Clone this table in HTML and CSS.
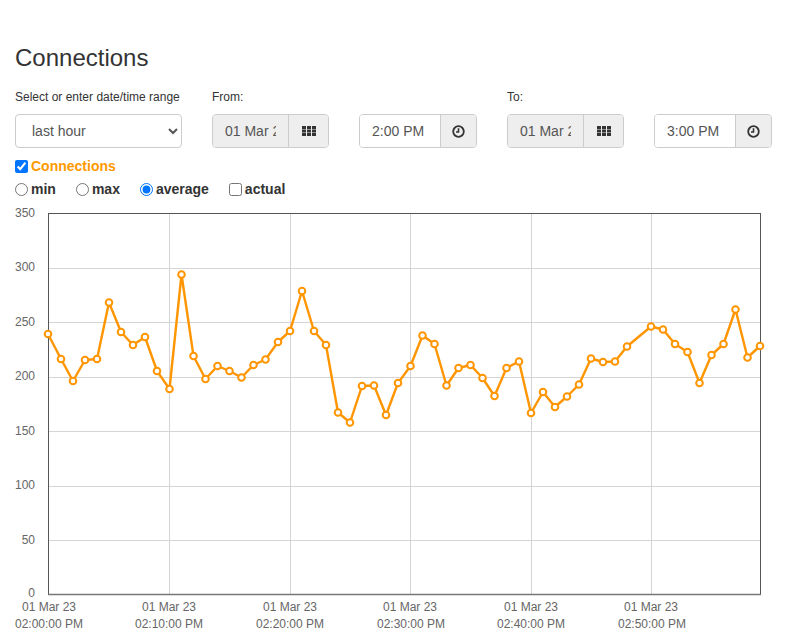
FILE: index.html
```html
<!DOCTYPE html>
<html>
<head>
<meta charset="utf-8">
<link rel="stylesheet" href="styles.css">
</head>
<body>
<div class="page">
  <h1 class="title">Connections</h1>
  <div class="controls">
    <div class="field">
      <label class="field-label">Select or enter date/time range</label>
      <select class="range-select">
        <option>last hour</option>
      </select>
    </div>
    <div class="field">
      <label class="field-label">From:</label>
      <div class="group group-date">
        <input class="grp-input readonly" type="text" value="01 Mar 23" readonly>
        <span class="grp-btn">
          <svg width="14" height="10" viewBox="0 0 14 10"><g fill="#333"><rect x="0" y="0" width="4" height="3"/><rect x="5" y="0" width="4" height="3"/><rect x="10" y="0" width="4" height="3"/><rect x="0" y="3.5" width="4" height="3"/><rect x="5" y="3.5" width="4" height="3"/><rect x="10" y="3.5" width="4" height="3"/><rect x="0" y="7" width="4" height="3"/><rect x="5" y="7" width="4" height="3"/><rect x="10" y="7" width="4" height="3"/></g></svg>
        </span>
      </div>
    </div>
    <div class="field">
      <label class="field-label">&nbsp;</label>
      <div class="group group-time">
        <input class="grp-input" type="text" value="2:00 PM">
        <span class="grp-btn">
          <svg width="13" height="13" viewBox="0 0 13 13"><circle cx="6.5" cy="6.5" r="5.3" fill="none" stroke="#333" stroke-width="1.8"/><path d="M6.5 3.2V7H4" fill="none" stroke="#333" stroke-width="1.6"/></svg>
        </span>
      </div>
    </div>
    <div class="field">
      <label class="field-label">To:</label>
      <div class="group group-date">
        <input class="grp-input readonly" type="text" value="01 Mar 23" readonly>
        <span class="grp-btn">
          <svg width="14" height="10" viewBox="0 0 14 10"><g fill="#333"><rect x="0" y="0" width="4" height="3"/><rect x="5" y="0" width="4" height="3"/><rect x="10" y="0" width="4" height="3"/><rect x="0" y="3.5" width="4" height="3"/><rect x="5" y="3.5" width="4" height="3"/><rect x="10" y="3.5" width="4" height="3"/><rect x="0" y="7" width="4" height="3"/><rect x="5" y="7" width="4" height="3"/><rect x="10" y="7" width="4" height="3"/></g></svg>
        </span>
      </div>
    </div>
    <div class="field">
      <label class="field-label">&nbsp;</label>
      <div class="group group-time">
        <input class="grp-input" type="text" value="3:00 PM">
        <span class="grp-btn">
          <svg width="13" height="13" viewBox="0 0 13 13"><circle cx="6.5" cy="6.5" r="5.3" fill="none" stroke="#333" stroke-width="1.8"/><path d="M6.5 3.2V7H4" fill="none" stroke="#333" stroke-width="1.6"/></svg>
        </span>
      </div>
    </div>
  </div>

  <div class="series-row">
    <label class="opt series"><input type="checkbox" checked>Connections</label>
  </div>
  <div class="opts-row">
    <label class="opt"><input type="radio" name="agg">min</label>
    <label class="opt"><input type="radio" name="agg">max</label>
    <label class="opt"><input type="radio" name="agg" checked>average</label>
    <label class="opt"><input type="checkbox">actual</label>
  </div>

  <svg class="chart" width="757" height="429" viewBox="15 205 757 429">
    <g stroke="#d4d4d4" stroke-width="1">
      <line x1="48" y1="268.5" x2="760" y2="268.5"/>
      <line x1="48" y1="322.5" x2="760" y2="322.5"/>
      <line x1="48" y1="377.5" x2="760" y2="377.5"/>
      <line x1="48" y1="431.5" x2="760" y2="431.5"/>
      <line x1="48" y1="486.5" x2="760" y2="486.5"/>
      <line x1="48" y1="540.5" x2="760" y2="540.5"/>
      <line x1="169.5" y1="213" x2="169.5" y2="594"/>
      <line x1="290.5" y1="213" x2="290.5" y2="594"/>
      <line x1="410.5" y1="213" x2="410.5" y2="594"/>
      <line x1="531.5" y1="213" x2="531.5" y2="594"/>
      <line x1="651.5" y1="213" x2="651.5" y2="594"/>
    </g>
    <rect x="48.5" y="213.5" width="712" height="381" fill="none" stroke="#555" stroke-width="1"/>
    <line x1="48" y1="594.5" x2="761" y2="594.5" stroke="#777" stroke-width="1.5"/>
    <g class="ylabels" text-anchor="end">
      <text x="35" y="217">350</text>
      <text x="35" y="271">300</text>
      <text x="35" y="326">250</text>
      <text x="35" y="380">200</text>
      <text x="35" y="435">150</text>
      <text x="35" y="489">100</text>
      <text x="35" y="544">50</text>
      <text x="35" y="597">0</text>
    </g>
    <g class="xlabels" text-anchor="middle">
      <text x="49" y="611">01 Mar 23</text><text x="49" y="628">02:00:00 PM</text>
      <text x="169" y="611">01 Mar 23</text><text x="169" y="628">02:10:00 PM</text>
      <text x="290" y="611">01 Mar 23</text><text x="290" y="628">02:20:00 PM</text>
      <text x="410" y="611">01 Mar 23</text><text x="411" y="628">02:30:00 PM</text>
      <text x="531" y="611">01 Mar 23</text><text x="531" y="628">02:40:00 PM</text>
      <text x="651" y="611">01 Mar 23</text><text x="652" y="628">02:50:00 PM</text>
    </g>
    <polyline class="line" points="48,334 61,359 73,381 85,360 97,359 109,302.5 121,332 133,345 145,337 157,371 169.5,389 181.5,274.5 193.5,356 205.5,379 217.5,366 229.5,371 241.5,377.5 253.5,365 265.5,359.5 278,342 290,331 302,291 314,331 326,345 338,412.5 350,422.5 362,386 374,385.5 386,415 398,383 410.5,366 422.5,335.5 434.5,344 446.5,385.5 458.5,368 470.5,365 482.5,378 494.5,396 506.5,368 519,361.5 531,413 543,392 555,407 567,396.5 579,384.5 591,358.5 603,362 615,361.5 627,346.5 651,326.5 663,329.5 675,344 687.5,352 699.5,383 711.5,355 723.5,344 735.5,309.5 747.5,357.5 760,346"/>
    <g class="dots">
      <circle cx="48" cy="334" r="3.3"/><circle cx="61" cy="359" r="3.3"/><circle cx="73" cy="381" r="3.3"/><circle cx="85" cy="360" r="3.3"/><circle cx="97" cy="359" r="3.3"/><circle cx="109" cy="302.5" r="3.3"/><circle cx="121" cy="332" r="3.3"/><circle cx="133" cy="345" r="3.3"/><circle cx="145" cy="337" r="3.3"/><circle cx="157" cy="371" r="3.3"/><circle cx="169.5" cy="389" r="3.3"/><circle cx="181.5" cy="274.5" r="3.3"/><circle cx="193.5" cy="356" r="3.3"/><circle cx="205.5" cy="379" r="3.3"/><circle cx="217.5" cy="366" r="3.3"/><circle cx="229.5" cy="371" r="3.3"/><circle cx="241.5" cy="377.5" r="3.3"/><circle cx="253.5" cy="365" r="3.3"/><circle cx="265.5" cy="359.5" r="3.3"/><circle cx="278" cy="342" r="3.3"/><circle cx="290" cy="331" r="3.3"/><circle cx="302" cy="291" r="3.3"/><circle cx="314" cy="331" r="3.3"/><circle cx="326" cy="345" r="3.3"/><circle cx="338" cy="412.5" r="3.3"/><circle cx="350" cy="422.5" r="3.3"/><circle cx="362" cy="386" r="3.3"/><circle cx="374" cy="385.5" r="3.3"/><circle cx="386" cy="415" r="3.3"/><circle cx="398" cy="383" r="3.3"/><circle cx="410.5" cy="366" r="3.3"/><circle cx="422.5" cy="335.5" r="3.3"/><circle cx="434.5" cy="344" r="3.3"/><circle cx="446.5" cy="385.5" r="3.3"/><circle cx="458.5" cy="368" r="3.3"/><circle cx="470.5" cy="365" r="3.3"/><circle cx="482.5" cy="378" r="3.3"/><circle cx="494.5" cy="396" r="3.3"/><circle cx="506.5" cy="368" r="3.3"/><circle cx="519" cy="361.5" r="3.3"/><circle cx="531" cy="413" r="3.3"/><circle cx="543" cy="392" r="3.3"/><circle cx="555" cy="407" r="3.3"/><circle cx="567" cy="396.5" r="3.3"/><circle cx="579" cy="384.5" r="3.3"/><circle cx="591" cy="358.5" r="3.3"/><circle cx="603" cy="362" r="3.3"/><circle cx="615" cy="361.5" r="3.3"/><circle cx="627" cy="346.5" r="3.3"/><circle cx="651" cy="326.5" r="3.3"/><circle cx="663" cy="329.5" r="3.3"/><circle cx="675" cy="344" r="3.3"/><circle cx="687.5" cy="352" r="3.3"/><circle cx="699.5" cy="383" r="3.3"/><circle cx="711.5" cy="355" r="3.3"/><circle cx="723.5" cy="344" r="3.3"/><circle cx="735.5" cy="309.5" r="3.3"/><circle cx="747.5" cy="357.5" r="3.3"/><circle cx="760" cy="346" r="3.3"/>
    </g>
  </svg>
</div>
</body>
</html>
```

FILE: styles.css
```css
html, body {
  margin: 0;
  padding: 0;
  background: #fff;
}
body {
  font-family: "Liberation Sans", Arial, Helvetica, sans-serif;
  color: #333;
  font-size: 14px;
}
.page {
  padding: 0 15px;
}
.title {
  font-size: 24px;
  font-weight: normal;
  line-height: 26px;
  margin: 45px 0 0 0;
  color: #333;
}
.controls {
  display: flex;
  gap: 30px;
  margin-top: 19px;
}
.field {
  display: flex;
  flex-direction: column;
}
.field-label {
  font-size: 12px;
  line-height: 14px;
  height: 14px;
  margin-bottom: 10px;
  color: #333;
}
.range-select {
  width: 167px;
  height: 34px;
  box-sizing: border-box;
  border: 1px solid #ccc;
  border-radius: 4px;
  background: #fff;
  padding: 6px 8px 6px 12px;
  font-family: "Liberation Sans", Arial, sans-serif;
  font-size: 14px;
  color: #555;
}
.group {
  display: flex;
  height: 34px;
  box-sizing: border-box;
  border: 1px solid #ccc;
  border-radius: 4px;
  overflow: hidden;
}
.group-date { width: 117px; }
.group-time { width: 118px; }
.grp-input {
  box-sizing: border-box;
  min-width: 0;
  border: none;
  outline: none;
  height: 32px;
  padding: 6px 12px;
  font-family: "Liberation Sans", Arial, sans-serif;
  font-size: 14px;
  color: #555;
  background: #fff;
}
.group-date .grp-input { width: 75px; }
.group-time .grp-input { width: 80px; }
.grp-input.readonly {
  background: #eee;
}
.grp-btn {
  flex: 1;
  display: flex;
  align-items: center;
  justify-content: center;
  background: #eee;
  border-left: 1px solid #ccc;
}
.series-row {
  margin-top: 8px;
  height: 20px;
  display: flex;
  align-items: center;
}
.opts-row {
  margin-top: 3px;
  height: 20px;
  display: flex;
  align-items: center;
}
.opt {
  display: flex;
  align-items: center;
  font-weight: bold;
  font-size: 14px;
  margin-right: 20px;
  color: #333;
}
.opt input {
  margin: 0 3px 0 0;
  width: 13px;
  height: 13px;
}
.series {
  color: #ff9900;
}
.chart {
  display: block;
  margin-top: 6px;
}
.ylabels text, .xlabels text {
  font-family: "Liberation Sans", Arial, sans-serif;
  font-size: 12px;
  fill: #666;
}
.line {
  fill: none;
  stroke: #ff9500;
  stroke-width: 2.4;
  stroke-linejoin: round;
}
.dots circle {
  fill: #fff;
  stroke: #ff9500;
  stroke-width: 2;
}
```
